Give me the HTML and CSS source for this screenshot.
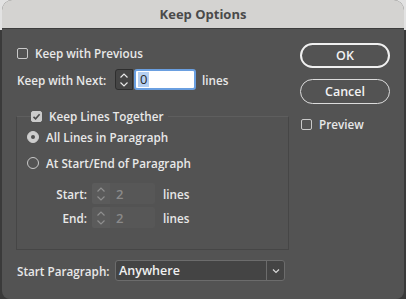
FILE: index.html
```html
<!DOCTYPE html>
<html>
<head>
<meta charset="utf-8">
<link rel="stylesheet" href="styles.css">
</head>
<body>
<div class="window">
  <div class="titlebar">Keep Options</div>
  <div class="content">
    <div class="left">
      <div class="row row1">
        <span class="cb"></span><span class="lbl">Keep with Previous</span>
      </div>
      <div class="row row2">
        <span class="lbl next-lbl">Keep with Next:</span>
        <span class="spin active">
          <svg width="10" height="16" viewBox="0 0 10 16"><path d="M1.5 5.5 L5 2 L8.5 5.5 M1.5 10.5 L5 14 L8.5 10.5" fill="none" stroke="#e8e8e8" stroke-width="1.2"/></svg>
        </span>
        <span class="field focus"><span class="sel">0</span></span>
        <span class="lbl unit">lines</span>
      </div>
      <fieldset class="group">
        <legend class="legend"><span class="cb checked"><svg width="11" height="11" viewBox="0 0 11 11"><path d="M2.5 5.8 L4.6 7.8 L8.6 3.2" fill="none" stroke="#4a4a4a" stroke-width="1.6"/></svg></span><span class="lbl">Keep Lines Together</span></legend>
        <div class="row radio-row r1">
          <span class="radio on"></span><span class="lbl">All Lines in Paragraph</span>
        </div>
        <div class="row radio-row r2">
          <span class="radio"></span><span class="lbl">At Start/End of Paragraph</span>
        </div>
        <div class="row num-row n1">
          <span class="lbl numlbl">Start:</span>
          <span class="spin dim">
            <svg width="10" height="16" viewBox="0 0 10 16"><path d="M1.5 5.5 L5 2 L8.5 5.5 M1.5 10.5 L5 14 L8.5 10.5" fill="none" stroke="#8e8e8e" stroke-width="1.2"/></svg>
          </span>
          <span class="field dimf">2</span>
          <span class="lbl unit2">lines</span>
        </div>
        <div class="row num-row n2">
          <span class="lbl numlbl">End:</span>
          <span class="spin dim">
            <svg width="10" height="16" viewBox="0 0 10 16"><path d="M1.5 5.5 L5 2 L8.5 5.5 M1.5 10.5 L5 14 L8.5 10.5" fill="none" stroke="#8e8e8e" stroke-width="1.2"/></svg>
          </span>
          <span class="field dimf">2</span>
          <span class="lbl unit2">lines</span>
        </div>
      </fieldset>
      <div class="row row-start">
        <span class="lbl next-lbl">Start Paragraph:</span>
        <span class="select"><span class="sel-text">Anywhere</span><span class="sel-btn"><svg width="10" height="8" viewBox="0 0 10 8"><path d="M2 2.5 L5 5.5 L8 2.5" fill="none" stroke="#d8d8d8" stroke-width="1.2"/></svg></span></span>
      </div>
    </div>
    <div class="right">
      <div class="btn ok">OK</div>
      <div class="btn cancel">Cancel</div>
      <div class="row preview">
        <span class="cb"></span><span class="lbl">Preview</span>
      </div>
    </div>
  </div>
</div>
</body>
</html>
```
FILE: styles.css
```css
html, body {
  margin: 0;
  padding: 0;
}
body {
  width: 406px;
  height: 299px;
  overflow: hidden;
  background: linear-gradient(#e2e2e2 0, #e2e2e2 30px, #3a3a3a 30px);
  font-family: "Open Sans", "Liberation Sans", sans-serif;
  font-size: 11.7px;
  font-weight: 600;
  color: #e8e8e8;
}
.window {
  margin-left: 2px;
  width: 402px;
  height: 299px;
  background: #535353;
  border-radius: 10px 10px 8px 8px;
  overflow: hidden;
}
.titlebar {
  height: 28px;
  background: #d4d3d1;
  border-bottom: 1px solid #3c3c3c;
  color: #4a4a4a;
  font-weight: bold;
  font-size: 13px;
  line-height: 28px;
  text-align: center;
}
.content {
  display: flex;
  padding: 14px 0 0 14px;
}
.left {
  width: 274px;
  display: flex;
  flex-direction: column;
}
.right {
  margin-left: 10px;
  width: 90px;
  display: flex;
  flex-direction: column;
}
.row {
  display: flex;
  align-items: center;
}
.lbl {
  white-space: nowrap;
}
.row1 {
  height: 20px;
  padding-left: 1px;
}
.cb {
  width: 11px;
  height: 11px;
  box-sizing: border-box;
  border: 1px solid #c9c9c9;
  border-radius: 2px;
  margin-right: 7px;
  flex: none;
  display: inline-flex;
}
.cb.checked {
  background: #cbcbcb;
  border-color: #cbcbcb;
}
.cb svg {
  margin: -1px;
}
.row2 {
  height: 21px;
  margin-top: 6px;
  padding-left: 1px;
}
.next-lbl {
  width: 98px;
}
.spin {
  width: 18px;
  height: 21px;
  box-sizing: border-box;
  display: inline-flex;
  align-items: center;
  justify-content: center;
  flex: none;
}
.spin.active {
  background: #454545;
  border: 1px solid #2e2e2e;
  border-radius: 3px 0 0 3px;
}
.field {
  height: 21px;
  box-sizing: border-box;
  display: inline-flex;
  align-items: center;
  flex: none;
}
.field.focus {
  width: 62px;
  margin-left: 1px;
  background: #ffffff;
  border: 2px solid #6a9fe0;
  border-radius: 3px;
  padding-left: 2px;
  color: #2a2a2a;
  font-size: 13px;
  font-weight: 400;
}
.sel {
  background: #b5d0f2;
  padding: 0 2px;
  line-height: 15px;
}
.unit {
  margin-left: 6px;
}
.group {
  margin: 17px 0 0 0;
  padding: 0 0 0 10px;
  border: 1px solid #464646;
  border-top-color: #5e5e5e;
  width: 273px;
  box-sizing: border-box;
  height: 143px;
}
.legend {
  padding: 0 4px 0 0;
  margin-left: 4px;
  display: flex;
  align-items: center;
  height: 18px;
}
.radio-row {
  height: 20px;
}
.r1 {
  margin-top: 2px;
}
.r2 {
  margin-top: 6px;
}
.radio {
  width: 12px;
  height: 12px;
  box-sizing: border-box;
  border-radius: 50%;
  border: 1px solid #c9c9c9;
  margin-right: 7px;
  flex: none;
  position: relative;
}
.radio.on {
  background: #cdcdcd;
  border-color: #cdcdcd;
}
.radio.on::after {
  content: "";
  position: absolute;
  left: 3px;
  top: 3px;
  width: 4px;
  height: 4px;
  border-radius: 50%;
  background: #505050;
}
.num-row {
  height: 21px;
}
.n1 {
  margin-top: 10px;
}
.n2 {
  margin-top: 3px;
}
.numlbl {
  width: 60px;
  text-align: right;
  margin-right: 5px;
}
.spin.dim {
  background: #5b5b5b;
  border-radius: 2px 0 0 2px;
}
.field.dimf {
  width: 45px;
  background: #575757;
  color: #8a8a8a;
  padding-left: 6px;
  font-size: 13px;
  border-radius: 0 2px 2px 0;
}
.unit2 {
  margin-left: 8px;
}
.row-start {
  height: 21px;
  margin-top: 10px;
  padding-left: 1px;
}
.select {
  width: 170px;
  height: 21px;
  box-sizing: border-box;
  border: 1px solid #6c6c6c;
  border-radius: 3px;
  background: #444444;
  display: flex;
  align-items: center;
}
.sel-text {
  flex: 1;
  padding-left: 3px;
  color: #f0f0f0;
  font-size: 12.5px;
}
.sel-btn {
  width: 17px;
  height: 100%;
  border-left: 1px solid #6c6c6c;
  display: flex;
  align-items: center;
  justify-content: center;
}
.btn {
  height: 25px;
  box-sizing: border-box;
  border-radius: 13px;
  display: flex;
  align-items: center;
  justify-content: center;
  color: #f2f2f2;
  font-size: 12.5px;
}
.ok {
  border: 2px solid #f0f0f0;
}
.cancel {
  margin-top: 11px;
  border: 1px solid #dcdcdc;
}
.preview {
  margin-top: 10px;
  height: 20px;
  padding-left: 1px;
}
```
